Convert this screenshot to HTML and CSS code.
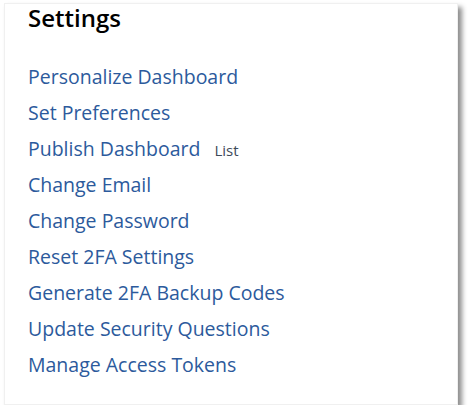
FILE: index.html
```html
<!DOCTYPE html>
<html>
<head>
<meta charset="utf-8">
<link rel="stylesheet" href="styles.css">
</head>
<body>
<div class="card">
  <h2 class="title">Settings</h2>
  <ul class="links">
    <li><a href="#">Personalize Dashboard</a></li>
    <li><a href="#">Set Preferences</a></li>
    <li><a href="#">Publish Dashboard</a><span class="tag">List</span></li>
    <li><a href="#">Change Email</a></li>
    <li><a href="#">Change Password</a></li>
    <li><a href="#">Reset 2FA Settings</a></li>
    <li><a href="#">Generate 2FA Backup Codes</a></li>
    <li><a href="#">Update Security Questions</a></li>
    <li><a href="#">Manage Access Tokens</a></li>
  </ul>
</div>
</body>
</html>
```
FILE: styles.css
```css
html, body {
  margin: 0;
  padding: 0;
  background: #ffffff;
}
body {
  padding: 3px 0 0 4px;
  font-family: "Open Sans", "Liberation Sans", sans-serif;
}
.card {
  width: 454px;
  height: 402px;
  box-sizing: border-box;
  background: #fff;
  border: 1px solid #f0f0f0;
  box-shadow: 4px 4px 5px rgba(0,0,0,0.45);
  padding: 0 0 0 23px;
}
.title {
  margin: 0;
  font-size: 24px;
  font-weight: 600;
  color: #000;
  line-height: 28px;
}
.links {
  list-style: none;
  margin: 33px 0 0 0;
  padding: 0;
}
.links li {
  height: 36px;
  line-height: 24px;
  display: flex;
  align-items: baseline;
}
.links a {
  font-size: 19.5px;
  color: #2c5a9c;
  text-decoration: none;
}
.tag {
  font-size: 15px;
  color: #3e4a5a;
  margin-left: 14px;
}
```
